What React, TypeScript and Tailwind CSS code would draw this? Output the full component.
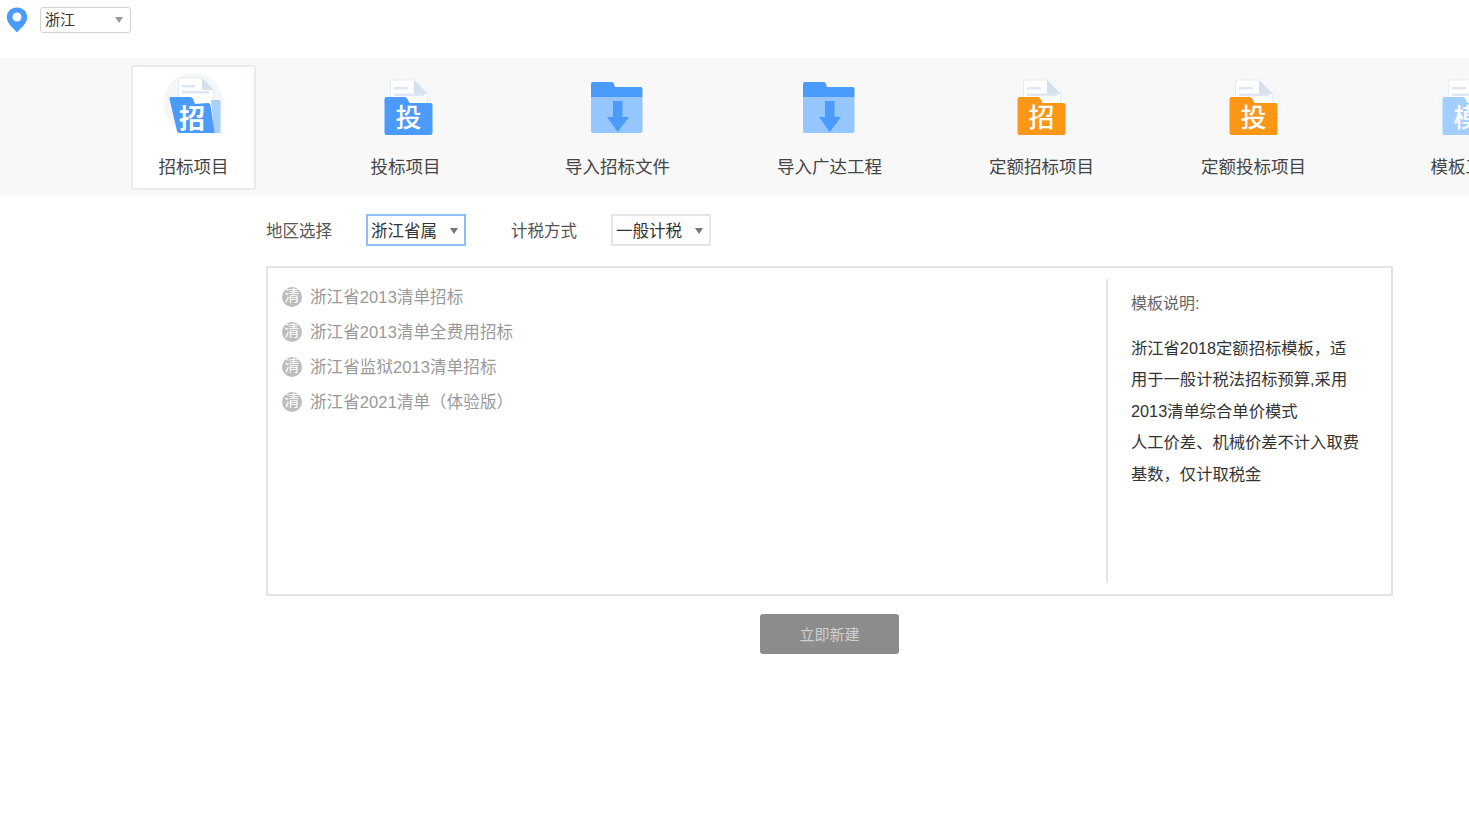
import React from 'react';

const fontStack = "font-['Liberation_Sans','Noto_Sans_CJK_SC',sans-serif]";

type TileKind = 'doc' | 'docLight' | 'import';

const tiles: { label: string; kind: TileKind; color: string; glyph?: string; active?: boolean; iconClass?: string }[] = [
  { label: '招标项目', kind: 'docLight', color: '#4a9bfb', glyph: '招', active: true },
  { label: '投标项目', kind: 'doc', color: '#4a9bfb', glyph: '投' },
  { label: '导入招标文件', kind: 'import', color: '#4a9bfb', iconClass: 'mr-[1px]' },
  { label: '导入广达工程', kind: 'import', color: '#4a9bfb', iconClass: 'mr-[1px]' },
  { label: '定额招标项目', kind: 'doc', color: '#fb9616', glyph: '招', iconClass: 'mr-[5px]' },
  { label: '定额投标项目', kind: 'doc', color: '#fb9616', glyph: '投', iconClass: 'mr-[6px]' },
  { label: '模板工程', kind: 'doc', color: '#a3cfff', glyph: '模', iconClass: 'mr-[3px]' },
];

const templates = ['浙江省2013清单招标', '浙江省2013清单全费用招标', '浙江省监狱2013清单招标', '浙江省2021清单（体验版）'];

const DocIcon = ({ color, glyph }: { color: string; glyph?: string }) => (
  <svg width="60" height="60" viewBox="0 0 60 60" className="overflow-visible">
    <circle cx="32" cy="30" r="29" fill="#f6f7f8" />
    <path d="M14.500 7q0-2 2-2H38l13.500 14v22h-37z" fill="#ffffff" stroke="#e3ebf5" />
    <path d="M38 5l13.500 14H40q-2 0-2-2z" fill="#d4e0ee" />
    <rect x="18" y="12" width="14" height="2.500" fill="#dfe7f2" />
    <rect x="18" y="18.500" width="30" height="2.500" fill="#dfe7f2" />
    <path d="M8.500 24q0-2 2-2h18q2 0 3 2l2 4h21q2 0 2 2v28q0 2-2 2h-44q-2 0-2-2z" fill={color} />
    <text x="32.500" y="52" textAnchor="middle" fontSize="26" fontWeight="500" fill="#ffffff" fontFamily="'Noto Sans CJK SC',sans-serif">{glyph}</text>
  </svg>
);

const TiltedDocIcon = ({ color, glyph }: { color: string; glyph?: string }) => (
  <svg width="60" height="60" viewBox="0 0 60 60" className="overflow-visible">
    <circle cx="29.500" cy="28" r="30" fill="#f5f6f7" />
    <path d="M14.500 5q0-2 2-2H38l11.500 12v30h-35z" fill="#ffffff" stroke="#e3ebf5" />
    <path d="M38 3l11.500 12H40q-2 0-2-2z" fill="#d4e0ee" />
    <rect x="18" y="10" width="13" height="2.500" fill="#dfe7f2" />
    <rect x="18" y="16" width="27" height="2.500" fill="#dfe7f2" />
    <path d="M47 25h7.500q2 0 2 2v31H50z" fill="#a8d0fd" />
    <path d="M5.500 24q-.5-2 1.500-2h19q2 0 3 2l2 5 13-1q2 0 2.500 2l4 28H15.500q-2 0-2.500-2z" fill={color} />
    <text x="28" y="53" textAnchor="middle" fontSize="26" fontWeight="700" fill="#ffffff" fontFamily="'Noto Sans CJK SC',sans-serif">{glyph}</text>
  </svg>
);

const ImportIcon = () => (
  <svg width="60" height="60" viewBox="0 0 60 60">
    <path d="M4 9q0-2 2-2h19q1.500 0 2 2l1 3h25.500q2 0 2 2v8H4z" fill="#4a9bfb" />
    <path d="M4 22h51.500v34q0 2-2 2H6q-2 0-2-2z" fill="#96c6fe" />
    <path d="M26 26h9.500v16H42L30.700 57 20 42h6z" fill="#4a9bfb" />
  </svg>
);

const Arrow = ({ className }: { className: string }) => (
  <span className={`h-0 w-0 border-x-[4.500px] border-t-[6px] border-x-transparent ${className}`} />
);

const Select = ({ value, focused }: { value: string; focused?: boolean }) => (
  <div className={`flex h-[32px] w-[100px] items-center justify-between border-2 pl-[3px] pr-[6px] text-[16.500px] text-[#333] ${focused ? 'border-[#8cc0fb]' : 'border-[#e6e6e6]'}`}>
    <span className="pt-[2px]">{value}</span>
    <Arrow className="mt-[2px] border-t-[#777]" />
  </div>
);

export default function App() {
  return (
    <div className={`h-[830px] w-[1469px] overflow-hidden bg-white ${fontStack}`}>
      <div className="flex h-[58px] items-start gap-[12px] pl-[6px] pt-[7px]">
        <svg width="22" height="26" viewBox="0 0 22 26">
          <path d="M11 0.500C5 0.500 0.800 4.800 0.800 10.300c0 6 6.200 10.700 10.200 15.200 4-4.500 10.200-9.200 10.200-15.200C21.200 4.800 17 0.500 11 0.500z" fill="#4a9bfb" />
          <circle cx="11" cy="10" r="4.500" fill="#ffffff" />
        </svg>
        <div className="flex h-[26px] w-[91px] items-center justify-between rounded-[3px] border border-[#d4d4d4] pl-[4px] pr-[7px] text-[15px] text-[#333]">
          <span>浙江</span>
          <Arrow className="border-t-[#999]" />
        </div>
      </div>

      <div className="flex h-[138px] gap-[87px] overflow-hidden bg-[#f8f8f8] pl-[131px] pt-[7px]">
        {tiles.map(tile => (
          <div
            key={tile.label}
            className={`flex h-[125px] w-[125px] shrink-0 flex-col items-center rounded-[3px] border-2 pt-[8px] ${tile.active ? 'border-[#e8ebef] bg-white' : 'border-transparent'}`}
          >
            <div className={tile.iconClass}>
              {tile.kind === 'import' ? <ImportIcon /> : tile.kind === 'docLight' ? <TiltedDocIcon color={tile.color} glyph={tile.glyph} /> : <DocIcon color={tile.color} glyph={tile.glyph} />}
            </div>
            <span className="mt-[20px] whitespace-nowrap text-[17.500px] leading-[24px] text-[#444]">{tile.label}</span>
          </div>
        ))}
      </div>

      <div className="ml-[266px] w-[1127px]">
        <div className="mb-[2px] flex h-[68px] items-center text-[16.500px] text-[#555]">
          <span className="w-[100px] pt-[2px]">地区选择</span>
          <Select value="浙江省属" focused />
          <span className="ml-[45px] w-[100px] pt-[2px]">计税方式</span>
          <Select value="一般计税" />
        </div>

        <div className="flex h-[330px] border-2 border-[#e3e3e3] py-[11px]">
          <div className="flex-1 pl-[14px] pt-[1px]">
            {templates.map(name => (
              <div key={name} className="flex h-[35px] items-center gap-[8px] text-[16.500px] tracking-[0.1px] text-[#999]">
                <span className="mb-[2px] flex h-[20px] w-[20px] items-center justify-center rounded-full bg-[#bdbdbd] text-[15px] text-white">清</span>
                <span>{name}</span>
              </div>
            ))}
          </div>
          <div className="w-[285px] border-l-2 border-[#e3e3e3] pl-[23px] pt-[12px]">
            <p className="text-[16px] leading-[26px] text-[#666]">模板说明:</p>
            <p className="mt-[16px] whitespace-nowrap text-[16.300px] leading-[31.400px] text-[#333]">
              浙江省2018定额招标模板，适
              <br />
              用于一般计税法招标预算,采用
              <br />
              2013清单综合单价模式
              <br />
              人工价差、机械价差不计入取费
              <br />
              基数，仅计取税金
            </p>
          </div>
        </div>

        <div className="mt-[18px] flex justify-center">
          <button className="h-[40px] w-[139px] rounded-[3px] bg-[#8c8c8c] pt-[2px] text-[15px] text-[#d0d0d0]">立即新建</button>
        </div>
      </div>
    </div>
  );
}
